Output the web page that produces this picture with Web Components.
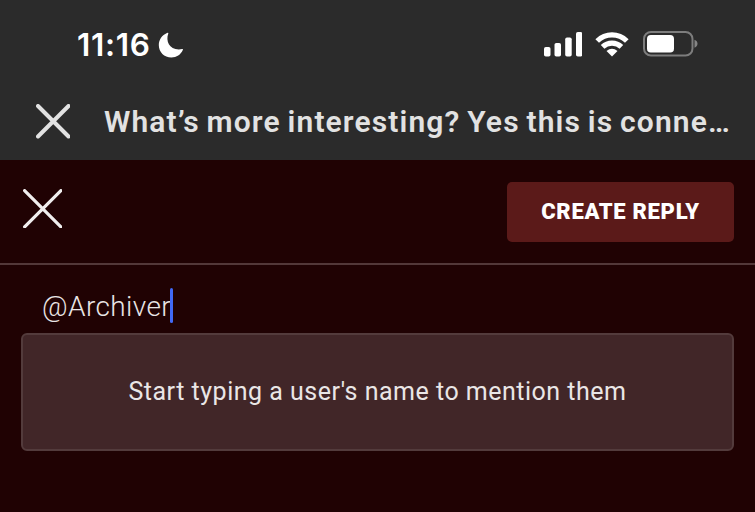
<!DOCTYPE html>
<html lang="en">
<head>
<meta charset="utf-8">
<title>Create reply</title>
<style>
  body {
    margin: 0;
    background: #200203;
    color: #e9e5e5;
    font-family: Roboto, "Liberation Sans", sans-serif;
  }
</style>
</head>
<body>
<reply-screen></reply-screen>

<script>
class StatusBar extends HTMLElement {
  constructor() {
    super();
    this.shadow = this.attachShadow({ mode: 'open' });
  }

  connectedCallback() {
    this.shadow.innerHTML =
    /*html*/`
    <style>
      :host {
        display: flex;
        justify-content: space-between;
        align-items: center;
        height: 88px;
        padding: 0 57px 0 77px;
        box-sizing: border-box;
        color: #fff;
        background: #2b2b2b;
      }
      div { display: flex; align-items: center; }
      .time {
        font: 600 31.500px/36px Inter, sans-serif;
        letter-spacing: 0.700px;
        width: 81px;
        padding-top: 1px;
      }
      svg { display: block; }
      .moon { margin-top: 2px; }
      .signal { margin-right: 13px; }
      .wifi { margin-right: 14px; }
    </style>
    <div>
      <span class="time">11:16</span>
      <svg class="moon" width="26" height="26" viewBox="0 0 26 26" fill="#fff"><path d="M10.300 1.500C7.200 9.500 12 19.300 24.200 17.100Q25.400 16.900 24.800 18C22.800 22.600 18.500 25.500 13.400 25.500C6.200 25.500 .8 20.100 .8 13C.8 7.600 4 3 9 .9Q10.700 .3 10.300 1.500Z"/></svg>
    </div>
    <div>
      <svg class="signal" width="38.500" height="25" viewBox="0 0 38.500 25" fill="#fff">
        <rect x="0" y="15" width="6.500" height="9.500" rx="1.800"/>
        <rect x="10.500" y="11" width="6.500" height="13.500" rx="1.800"/>
        <rect x="21.200" y="5.500" width="6.500" height="19" rx="1.800"/>
        <rect x="32" y="0" width="6.500" height="24.500" rx="1.800"/>
      </svg>
      <svg class="wifi" width="34" height="25" viewBox="0 0 34 25" fill="none" stroke="#fff" stroke-width="5.200">
        <path d="M2.200 9Q8.500 2.900 17 2.900T31.800 9"/>
        <path d="M7.600 14.900Q11.500 11.100 17 11.100T26.400 14.900"/>
        <path d="M17 24.500L11.500 19.100Q17 14.600 22.500 19.100Z" fill="#fff" stroke="none"/>
      </svg>
      <svg width="55" height="26" viewBox="0 0 55 26">
        <rect x="1" y="1" width="48.500" height="23.500" rx="7" fill="none" stroke="#7d7d7d" stroke-width="2"/>
        <rect x="4" y="4" width="27" height="17.500" rx="3.800" fill="#fff"/>
        <path d="M51.500 8.800Q54.500 10 54.500 12.750T51.500 16.700Z" fill="#858585"/>
      </svg>
    </div>
    `;
  }
}

class CloseIcon extends HTMLElement {
  constructor() {
    super();
    this.shadow = this.attachShadow({ mode: 'open' });
  }

  connectedCallback() {
    const size = Number(this.getAttribute('size'));
    const stroke = Number(this.getAttribute('stroke'));
    const a = stroke / 2;
    const b = size - a;
    this.shadow.innerHTML =
    /*html*/`
    <style>
      :host { display: block; flex: none; }
      svg { display: block; }
    </style>
    <svg width="${size}" height="${size}" fill="none" stroke="currentColor" stroke-width="${stroke}" stroke-linecap="round">
      <path d="M${a} ${a}L${b} ${b}M${b} ${a}L${a} ${b}"/>
    </svg>
    `;
  }
}

class TopicHeader extends HTMLElement {
  constructor() {
    super();
    this.shadow = this.attachShadow({ mode: 'open' });
  }

  connectedCallback() {
    this.shadow.innerHTML =
    /*html*/`
    <style>
      :host {
        display: flex;
        align-items: flex-start;
        height: 72px;
        padding: 16px 0 0 35.500px;
        box-sizing: border-box;
        background: #2b2b2b;
        color: #e2e2e2;
      }
      h1 {
        margin: 0 0 0 34px;
        font-size: 30px;
        line-height: 36px;
        font-weight: 600;
        letter-spacing: 1.130px;
        word-spacing: -1.800px;
        white-space: nowrap;
      }
    </style>
    <close-icon size="34.500" stroke="4"></close-icon>
    <h1><slot></slot></h1>
    `;
  }
}

class ReplyToolbar extends HTMLElement {
  constructor() {
    super();
    this.shadow = this.attachShadow({ mode: 'open' });
  }

  connectedCallback() {
    this.shadow.innerHTML =
    /*html*/`
    <style>
      :host {
        display: flex;
        justify-content: space-between;
        align-items: flex-start;
        height: 105px;
        padding: 21.500px 21px 0 22.500px;
        box-sizing: border-box;
        border-bottom: 2px solid #533839;
      }
      close-icon { margin-top: 7px; color: #f0eeee; }
      button {
        width: 227px;
        height: 60px;
        padding: 0;
        border: none;
        border-radius: 5px;
        background: #5b1a19;
        color: #fff;
        font: 900 22px/60px Roboto, sans-serif;
        letter-spacing: 0.700px;
        white-space: nowrap;
      }
    </style>
    <close-icon size="39.500" stroke="3.200"></close-icon>
    <button><slot></slot></button>
    `;
  }
}

class ReplyEditor extends HTMLElement {
  constructor() {
    super();
    this.shadow = this.attachShadow({ mode: 'open' });
  }

  connectedCallback() {
    this.shadow.innerHTML =
    /*html*/`
    <style>
      :host {
        display: flex;
        align-items: flex-start;
        height: 68px;
        padding: 14px 0 0 42px;
        box-sizing: border-box;
      }
      span {
        width: 127.500px;
        margin-top: 1px;
        font-size: 28px;
        line-height: 54px;
        font-weight: 300;
        letter-spacing: 0.400px;
        white-space: nowrap;
      }
      i {
        width: 3.500px;
        height: 35px;
        margin-top: 9px;
        border-radius: 2px;
        background: #4169f5;
      }
    </style>
    <span><slot></slot></span><i></i>
    `;
  }
}

class MentionHint extends HTMLElement {
  constructor() {
    super();
    this.shadow = this.attachShadow({ mode: 'open' });
  }

  connectedCallback() {
    this.shadow.innerHTML =
    /*html*/`
    <style>
      :host {
        display: flex;
        justify-content: center;
        align-items: center;
        height: 118px;
        margin: 0 21px;
        padding-bottom: 2px;
        box-sizing: border-box;
        border: 2px solid #533b3c;
        border-radius: 6px;
        background: #412628;
        color: #eae6e6;
        font-size: 25px;
        letter-spacing: 0.5px;
        white-space: nowrap;
      }
    </style>
    <span><slot></slot></span>
    `;
  }
}

class ReplyScreen extends HTMLElement {
  constructor() {
    super();
    this.shadow = this.attachShadow({ mode: 'open' });
  }

  connectedCallback() {
    this.shadow.innerHTML =
    /*html*/`
    <style>
      :host {
        display: flex;
        flex-direction: column;
        height: 512px;
        overflow: hidden;
      }
      status-bar, topic-header, reply-toolbar, reply-editor, mention-hint { flex: none; }
    </style>
    <status-bar></status-bar>
    <topic-header>What’s more interesting? Yes this is conne…</topic-header>
    <reply-toolbar>CREATE REPLY</reply-toolbar>
    <reply-editor>@Archiver</reply-editor>
    <mention-hint>Start typing a user's name to mention them</mention-hint>
    `;
  }
}

customElements.define('status-bar', StatusBar);
customElements.define('close-icon', CloseIcon);
customElements.define('topic-header', TopicHeader);
customElements.define('reply-toolbar', ReplyToolbar);
customElements.define('reply-editor', ReplyEditor);
customElements.define('mention-hint', MentionHint);
customElements.define('reply-screen', ReplyScreen);
</script>
</body>
</html>
